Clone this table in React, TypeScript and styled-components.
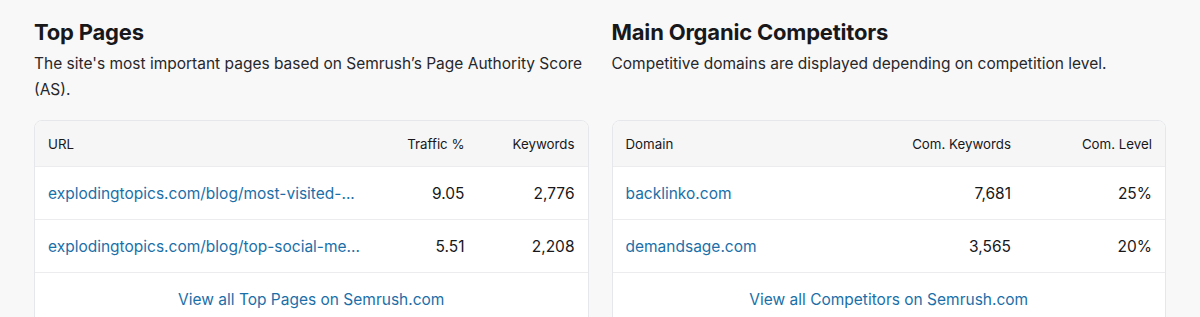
import styled, { createGlobalStyle } from "styled-components";

const GlobalStyle = createGlobalStyle`
  body {
    margin: 0;
    background: #f8f8f9;
    font-family: Inter, "Noto Sans", sans-serif;
    color: #18181b;
  }
`;

const Page = styled.div`
  display: grid;
  grid-template-columns: 1fr 1fr;
  grid-template-rows: auto auto auto;
  column-gap: 23px;
  padding: 18px 34px 0;
`;

const Title = styled.h2`
  margin: 0;
  font-size: 22px;
  line-height: 28px;
  font-weight: 700;
  letter-spacing: -0.2px;
  color: #18181b;
`;

const Description = styled.p`
  margin: 5px 0 17px;
  font-size: 15.5px;
  line-height: 26px;
  color: #27272a;
`;

const Card = styled.div`
  border: 1px solid #e6e7ea;
  border-radius: 8px;
  background: #fff;
  overflow: hidden;
`;

const Row = styled.div<{ cols: string; head?: boolean }>`
  display: grid;
  grid-template-columns: ${(p) => p.cols};
  align-items: center;
  height: ${(p) => (p.head ? "45px" : "52px")};
  padding: 0 13px;
  background: ${(p) => (p.head ? "#f6f6f7" : "#fff")};
  border-bottom: 1px solid #ececef;
  font-size: ${(p) => (p.head ? "13.3px" : "15.5px")};
  color: #18181b;
`;

const Cell = styled.div<{ right?: boolean }>`
  text-align: ${(p) => (p.right ? "right" : "left")};
  white-space: nowrap;
`;

const Link = styled.a`
  color: #1b6fa8;
  text-decoration: none;
  white-space: nowrap;
`;

const Footer = styled.div`
  display: flex;
  justify-content: center;
  align-items: center;
  height: 52px;
  font-size: 15.5px;
`;

type TableProps = {
  cols: string;
  headers: string[];
  rows: string[][];
  footer: string;
};

function DataTable({ cols, headers, rows, footer }: TableProps) {
  return (
    <Card>
      <Row cols={cols} head>
        {headers.map((h, i) => (
          <Cell key={h} right={i > 0}>
            {h}
          </Cell>
        ))}
      </Row>
      {rows.map((r) => (
        <Row cols={cols} key={r[0]}>
          <Link href="#">{r[0]}</Link>
          {r.slice(1).map((v, i) => (
            <Cell right key={i}>
              {v}
            </Cell>
          ))}
        </Row>
      ))}
      <Footer>
        <Link href="#">{footer}</Link>
      </Footer>
    </Card>
  );
}

export default function App() {
  return (
    <>
      <GlobalStyle />
      <Page>
        <Title>Top Pages</Title>
        <Title>Main Organic Competitors</Title>
        <Description>
          The site's most important pages based on Semrush’s Page Authority Score (AS).
        </Description>
        <Description>
          Competitive domains are displayed depending on competition level.
        </Description>
        <DataTable
          cols="1fr 90px 110px"
          headers={["URL", "Traffic %", "Keywords"]}
          rows={[
            ["explodingtopics.com/blog/most-visited-...", "9.05", "2,776"],
            ["explodingtopics.com/blog/top-social-me...", "5.51", "2,208"],
          ]}
          footer="View all Top Pages on Semrush.com"
        />
        <DataTable
          cols="1fr 160px 141px"
          headers={["Domain", "Com. Keywords", "Com. Level"]}
          rows={[
            ["backlinko.com", "7,681", "25%"],
            ["demandsage.com", "3,565", "20%"],
          ]}
          footer="View all Competitors on Semrush.com"
        />
      </Page>
    </>
  );
}
